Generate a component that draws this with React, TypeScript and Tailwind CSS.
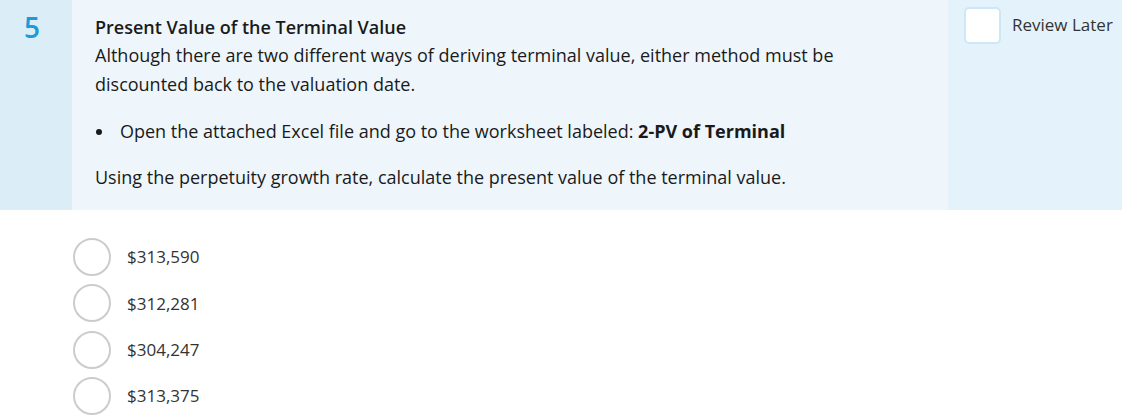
const options = ['$313,590', '$312,281', '$304,247', '$313,375']

export default function App() {
  return (
    <div className="w-[1122px] h-[420px] bg-white text-[#1a1a1a]" style={{ fontFamily: '"Open Sans", sans-serif' }}>
      <div className="flex h-[210px]">
        <div className="w-[72px] shrink-0 bg-[#dbeef8] pt-[10px] pl-[24px]">
          <span className="text-[28px] font-semibold leading-[34px] text-[#1e9ad6]">5</span>
        </div>
        <div className="flex-1 bg-[#eef6fc] pl-[23px] pt-[15px]">
          <h2 className="text-[18px] font-semibold leading-[24px]">Present Value of the Terminal Value</h2>
          <p className="mt-[2px] w-[780px] text-[18px] leading-[29px]">
            Although there are two different ways of deriving terminal value, either method must be discounted back to the
            valuation date.
          </p>
          <div className="mt-[18px] flex items-center text-[18px] leading-[29px]">
            <span className="ml-[1px] mr-[18px] h-[6px] w-[6px] rounded-full bg-[#1a1a1a]" />
            <span>
              Open the attached Excel file and go to the worksheet labeled: <b className="font-bold">2-PV of Terminal</b>
            </span>
          </div>
          <p className="mt-[17px] text-[18px] leading-[29px]">
            Using the perpetuity growth rate, calculate the present value of the terminal value.
          </p>
        </div>
        <div className="w-[174px] shrink-0 bg-[#e4f3fb] pl-[16px] pt-[7px]">
          <label className="flex items-start gap-[11px]">
            <span className="h-[37px] w-[37px] shrink-0 rounded-[5px] border-2 border-[#cde8f5] bg-white" />
            <span className="mt-[6px] text-[17px] leading-[24px] text-[#333]">Review Later</span>
          </label>
        </div>
      </div>
      <div className="flex flex-col gap-[8.4px] pl-[73px] pt-[28px]">
        {options.map((o) => (
          <label key={o} className="flex items-center gap-[16px]">
            <span className="h-[38px] w-[38px] rounded-full border-2 border-[#cccccc] bg-white" />
            <span className="text-[17px] text-[#333]">{o}</span>
          </label>
        ))}
      </div>
    </div>
  )
}
